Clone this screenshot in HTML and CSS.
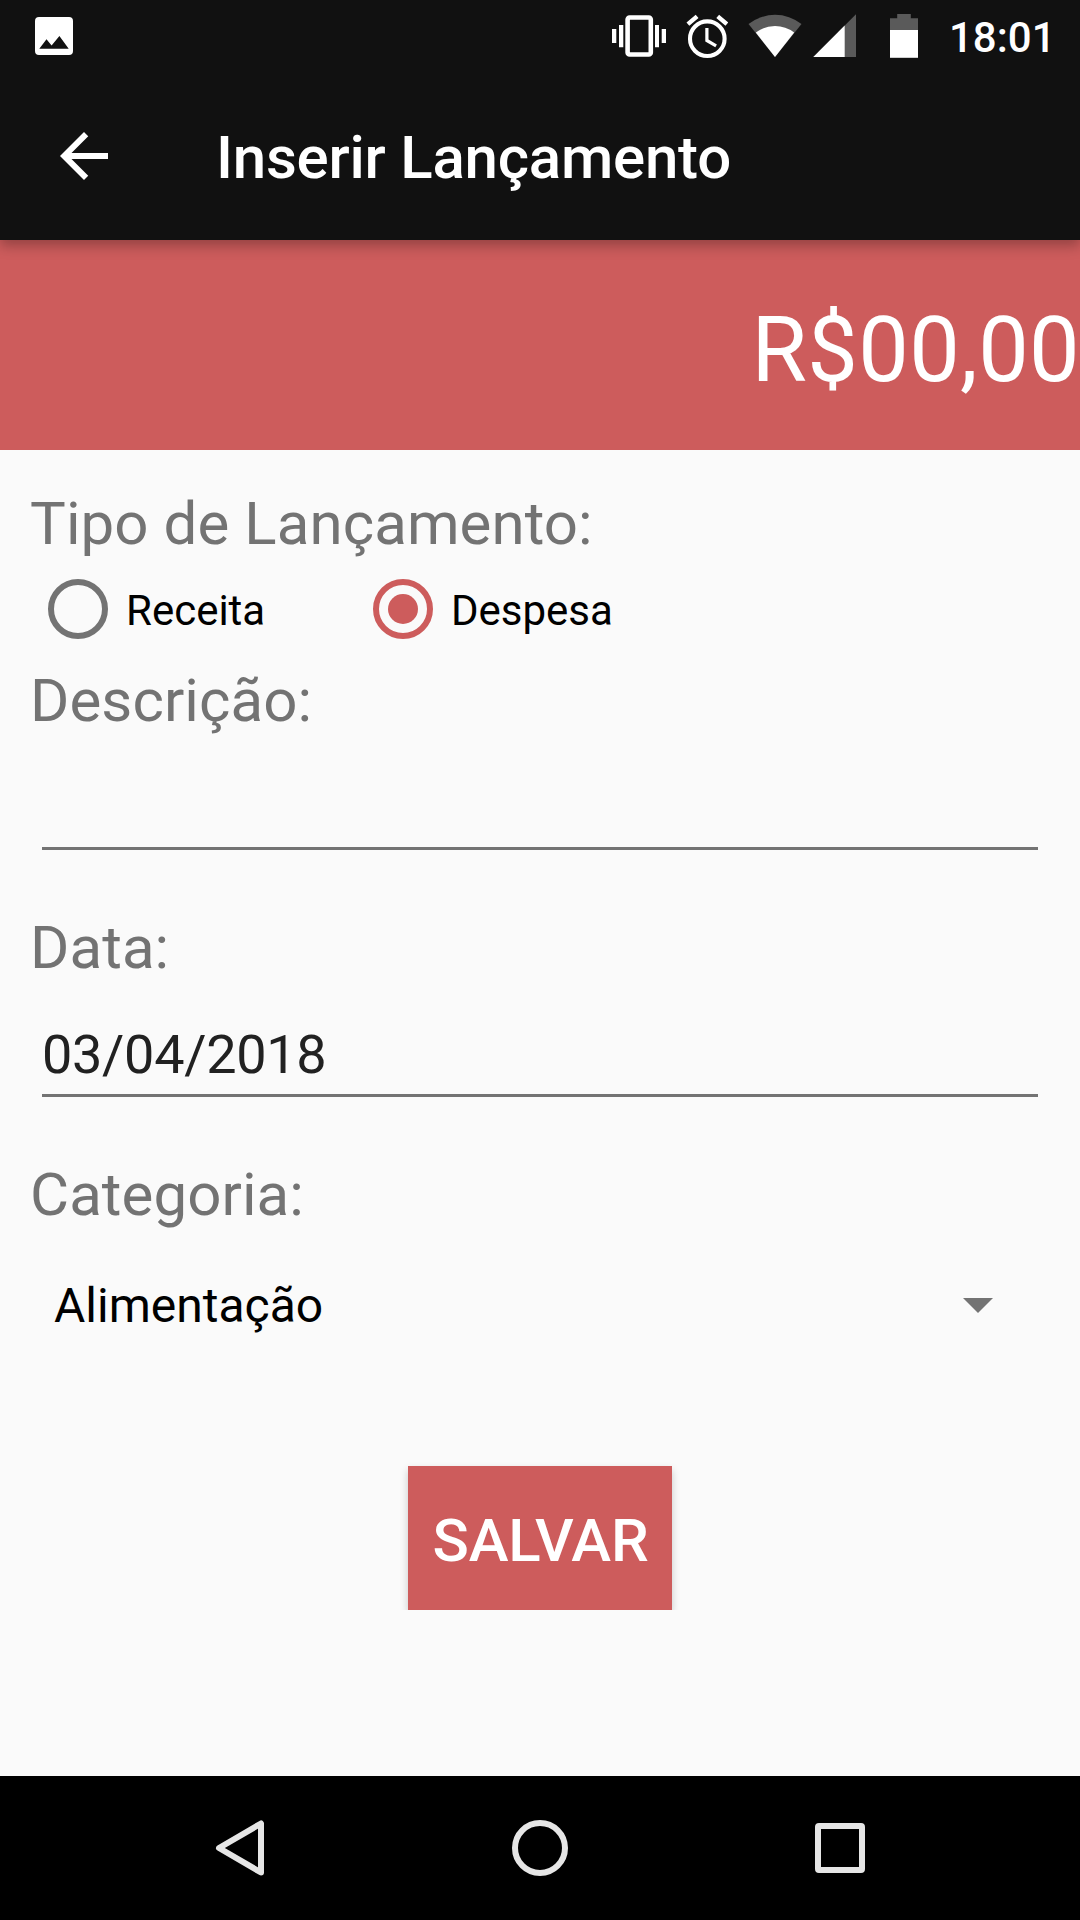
FILE: index.html
```html
<!DOCTYPE html>
<html lang="pt-BR">
<head>
<meta charset="utf-8">
<title>Inserir Lançamento</title>
<link rel="stylesheet" href="styles.css">
</head>
<body>
<div class="screen">
  <header class="header">
    <div class="status">
      <svg class="status-photo" width="38" height="38" viewBox="0 0 38 38"><path fill="#fff" fill-rule="evenodd" d="M4 0h30a4 4 0 0 1 4 4v30a4 4 0 0 1-4 4H4a4 4 0 0 1-4-4V4a4 4 0 0 1 4-4zM4.3 31.8h29.4L24.4 19l-7.8 9.5-5.1-6.3z"/></svg>
      <svg width="54" height="72" viewBox="612 0 54 72" fill="#fff"><path d="M612 29h4.3v14H612zM619 25h4.3v22.3H619zM655 25h4v22.3h-4zM661.7 29h4.3v14h-4.3z"/><rect x="627.6" y="17.5" width="23.2" height="37" rx="2" fill="none" stroke="#fff" stroke-width="4.6"/></svg>
      <svg class="alarm" width="42" height="72" viewBox="686 0 42 72" fill="none" stroke="#fff"><circle cx="707.3" cy="38.7" r="17.3" stroke-width="4.1"/><path stroke-width="4.4" d="M687.9 24.1l9.2-7.7M726.9 24.1l-9.2-7.7"/><path stroke-width="3.2" d="M706.9 28v12.5l9.2 5.3"/></svg>
      <svg class="wifi" width="54" height="72" viewBox="748.5 0 54 72"><path fill="#5a5a5a" d="M775.5 57L749 24a43 43 0 0 1 53 0z"/><path fill="#fff" d="M775.5 57l-19.2-24.4a31.3 31.3 0 0 1 38.4 0z"/></svg>
      <svg class="signal" width="43" height="72" viewBox="813 0 43 72"><path fill="#5a5a5a" d="M856 14.3V57h-42.7z"/><path fill="#fff" d="M844.7 25.6V57h-31.4z"/></svg>
      <svg class="battery" width="28" height="72" viewBox="890 0 28 72"><path fill="#5a5a5a" d="M890 18.3h7.2V14h13.6v4.3H918V31h-28z"/><path fill="#fff" d="M890 30h28v27.8h-28z"/></svg>
      <span class="clock">18:01</span>
    </div>
    <div class="toolbar">
      <svg class="back" width="72" height="72" viewBox="0 0 24 24"><path fill="#fff" d="M20 11H7.83l5.59-5.59L12 4l-8 8 8 8 1.41-1.41L7.83 13H20z"/></svg>
      <h1 class="title">Inserir Lançamento</h1>
    </div>
  </header>
  <div class="amount">R$00,00</div>
  <main class="form">
    <div class="label">Tipo de Lançamento:</div>
    <div class="radios">
      <div class="radio"><span class="ring"></span><span class="radio-text">Receita</span></div>
      <div class="radio"><span class="ring checked"></span><span class="radio-text">Despesa</span></div>
    </div>
    <div class="label">Descrição:</div>
    <div class="field"></div>
    <div class="label">Data:</div>
    <div class="field">03/04/2018</div>
    <div class="label">Categoria:</div>
    <div class="select">
      <span>Alimentação</span>
      <svg width="30" height="15" viewBox="0 0 30 15"><path fill="#737373" d="M0 0h30L15 15z"/></svg>
    </div>
    <button class="save">SALVAR</button>
  </main>
  <nav class="nav">
    <svg width="60" height="60" viewBox="0 0 60 60"><path d="M51 5.5v49L9 30z"/></svg>
    <svg width="60" height="60" viewBox="0 0 60 60"><circle cx="30" cy="30" r="25"/></svg>
    <svg width="60" height="60" viewBox="0 0 60 60"><rect x="8" y="8" width="44" height="44" rx="1"/></svg>
  </nav>
</div>
</body>
</html>
```
FILE: styles.css
```css
* {
  box-sizing: border-box;
}

body {
  margin: 0;
  font-family: Roboto, sans-serif;
  background: #fafafa;
}

svg {
  display: block;
  flex: none;
}

.screen {
  display: flex;
  flex-direction: column;
  width: 1080px;
  height: 1920px;
  overflow: hidden;
}

.header {
  position: relative;
  height: 240px;
  background: #111;
  color: #fff;
  box-shadow: 0 6px 12px rgba(0, 0, 0, 0.27);
}

.status {
  display: flex;
  align-items: center;
  height: 72px;
  padding-left: 35px;
}

.status-photo {
  margin-right: 539px;
}

.alarm {
  margin-left: 20px;
}

.wifi {
  margin-left: 20px;
}

.signal {
  margin-left: 11px;
}

.battery {
  margin-left: 34px;
}

.clock {
  margin-left: 31px;
  font-size: 42px;
  font-weight: 500;
  line-height: 49px;
  padding-top: 2px;
}

.toolbar {
  display: flex;
  align-items: center;
  height: 168px;
  padding-left: 48px;
}

.title {
  margin: 2px 0 0 96px;
  font-size: 60px;
  font-weight: 500;
  line-height: 71px;
  letter-spacing: -0.22px;
}

.amount {
  height: 210px;
  padding-top: 58px;
  background: #cd5c5c;
  color: #fff;
  font-size: 90px;
  line-height: 106px;
  letter-spacing: 0.35px;
  text-align: right;
}

.form {
  display: flex;
  flex-direction: column;
  height: 1326px;
  padding: 38px 30px 0;
}

.label {
  color: #737373;
  font-size: 60px;
  line-height: 71px;
  letter-spacing: 0.08px;
}

.radios {
  display: flex;
  height: 96px;
  margin: 2px 0 8px;
}

.radio {
  display: flex;
  align-items: center;
  gap: 18px;
  width: 325px;
  padding-left: 18px;
  font-size: 42px;
  line-height: 49px;
}

.radio-text {
  padding-top: 2px;
}

.ring {
  display: flex;
  align-items: center;
  justify-content: center;
  width: 60px;
  height: 60px;
  border: 6px solid #737373;
  border-radius: 50%;
}

.ring.checked {
  border-color: #cd5c5c;
}

.ring.checked::before {
  content: "";
  width: 30px;
  height: 30px;
  border-radius: 50%;
  background: #cd5c5c;
}

.field {
  height: 114px;
  margin: 0 12px 62px;
  padding-top: 40px;
  border-bottom: 3px solid #737373;
  color: #212121;
  font-size: 54px;
  line-height: 63px;
  letter-spacing: -0.3px;
}

.select {
  display: flex;
  align-items: center;
  justify-content: space-between;
  height: 57px;
  margin: 47px 57px 132px 24px;
  font-size: 48px;
  line-height: 57px;
}

.save {
  align-self: center;
  width: 264px;
  height: 144px;
  padding: 4px 0 0 1px;
  border: 0;
  background: #cd5c5c;
  box-shadow: 0 4px 8px rgba(0, 0, 0, 0.2);
  clip-path: inset(-4px -16px 0);
  color: #fff;
  font: 500 60px/71px Roboto, sans-serif;
  letter-spacing: -0.2px;
}

.nav {
  display: flex;
  align-items: center;
  justify-content: center;
  gap: 240px;
  height: 144px;
  background: #000;
}

.nav svg {
  fill: none;
  stroke: #e6e6e6;
  stroke-width: 6;
  stroke-linejoin: round;
}
```
